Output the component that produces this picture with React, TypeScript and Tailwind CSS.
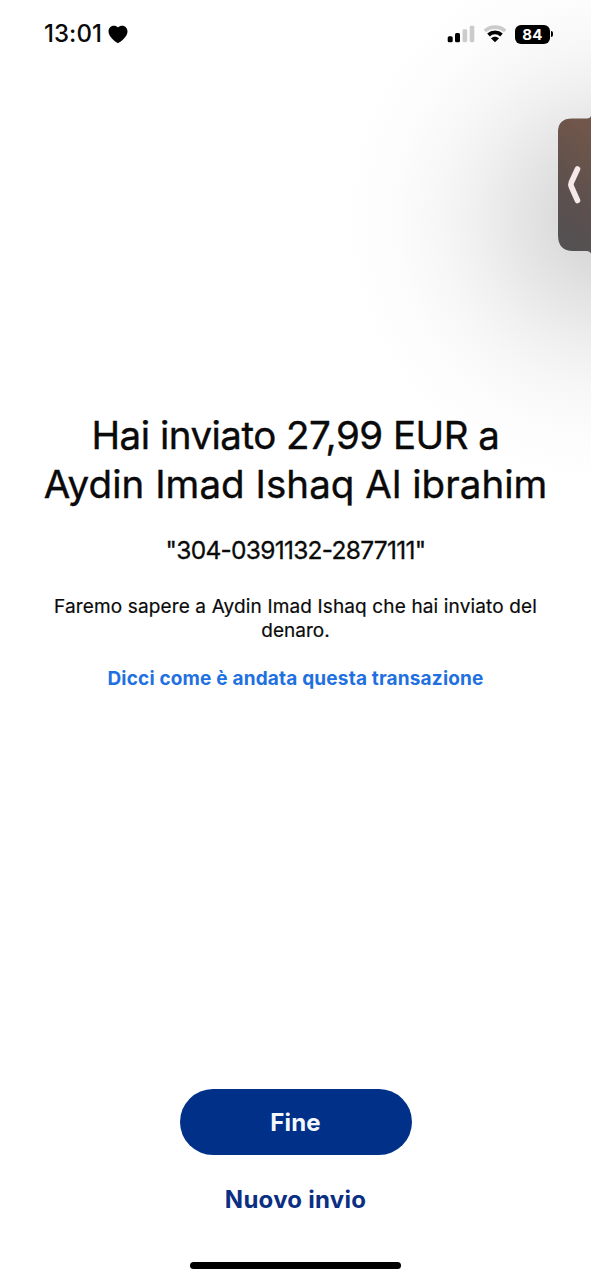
function Heart() {
  return (
    <svg width="20" height="19" viewBox="0 0 20 19" aria-hidden="true">
      <path
        d="M10 18.300C7.800 17 .5 12.300.5 6.600.5 3.100 2.800.7 5.600.7c1.900 0 3.500.6 4.400 1.900C10.900 1.300 12.500.7 14.400.7c2.800 0 5.100 2.400 5.100 5.900 0 5.700-7.300 10.400-9.500 11.700Z"
        fill="#000"
      />
    </svg>
  );
}

function Signal() {
  return (
    <svg width="28" height="18" viewBox="0 0 28 18" aria-hidden="true">
      <rect x="0.700" y="11.200" width="5" height="6" rx="1.500" fill="#000" />
      <rect x="8" y="8" width="5" height="9.200" rx="1.500" fill="#000" />
      <rect x="15.600" y="4.300" width="4.600" height="12.900" rx="1.400" fill="#cbcbcb" />
      <rect x="22.700" y="0.800" width="4.600" height="16.400" rx="1.400" fill="#cbcbcb" />
    </svg>
  );
}

function Wifi() {
  return (
    <svg width="24" height="18" viewBox="0 0 24 18" aria-hidden="true">
      <path d="M1.800 6C7.400.800 16.600.800 22.200 6" fill="none" stroke="#cbcbcb" strokeWidth="3.600" />
      <path d="M5.500 10C9.200 6.500 14.800 6.500 18.500 10" fill="none" stroke="#000" strokeWidth="3.800" />
      <path d="M7.900 13.200c2.300-2.100 5.900-2.100 8.200 0L12 17.300Z" fill="#000" />
    </svg>
  );
}

function StatusBar() {
  return (
    <header className="flex h-[68px] items-center justify-between pr-[38px] pl-[44px]">
      <div className="flex items-center gap-[6px]">
        <span className="w-[58px] text-[24px] leading-[68px] font-medium tracking-[0.050px] whitespace-nowrap">13:01</span>
        <Heart />
      </div>
      <div className="flex items-center">
        <Signal />
        <div className="ml-[8px] flex">
          <Wifi />
        </div>
        <div className="ml-[8px] flex h-[19px] w-[35px] items-center justify-center rounded-[6px] bg-black text-[15px] leading-[19px] font-bold tracking-[0.300px] text-white">
          84
        </div>
        <div className="ml-[1px] h-[6px] w-[2px] rounded-r-full bg-black" />
      </div>
    </header>
  );
}

function SideHandle() {
  return (
    <button aria-label="Apri" className="absolute top-[114px] right-0 h-[142px] w-[33px]">
      <svg width="33" height="142" viewBox="0 0 33 142">
        <defs>
          <linearGradient id="handle" x1="0.600" y1="0" x2="0.400" y2="1">
            <stop offset="0" stopColor="#72564a" />
            <stop offset="0.250" stopColor="#69544b" />
            <stop offset="0.600" stopColor="#5c504e" />
            <stop offset="1" stopColor="#535153" />
          </linearGradient>
        </defs>
        <path d="M33 2Q32 4.500 29 4.500H14Q0 4.500 0 18V121Q0 137 15 137H29Q32 137 33 139.500Z" fill="url(#handle)" />
        <path d="M19.500 55L13.300 68.500Q12.500 70.500 13.300 72.500L19.500 86.500" fill="none" stroke="#f4e8e8" strokeWidth="5.600" strokeLinecap="round" strokeLinejoin="round" />
      </svg>
    </button>
  );
}

export default function App() {
  return (
    <div className="relative flex h-[1280px] w-[591px] flex-col overflow-hidden bg-white bg-[radial-gradient(ellipse_270px_270px_at_611px_218px,#d0d0d0_0%,#d6d6d6_12%,#dfdfdf_24%,#e8e8e8_38%,#f0f0f0_50%,#f7f7f7_64%,#fcfcfc_80%,#ffffff_100%)] font-['Inter','Liberation_Sans',sans-serif] text-[#0a0a0a]">
      <StatusBar />
      <main className="flex flex-1 flex-col items-center pt-[343px] text-center whitespace-nowrap">
        <h1 className="text-[38.500px] leading-[48.500px] font-normal [-webkit-text-stroke:0.4px_#0a0a0a]">
          <span className="block tracking-[-0.500px]">Hai inviato 27,99 EUR a</span>
          <span className="block tracking-[0.050px]">Aydin Imad Ishaq Al ibrahim</span>
        </h1>
        <p className="mt-[27px] text-[24.500px] leading-[30px] tracking-[-0.720px] [-webkit-text-stroke:0.300px_#0a0a0a]">"304-0391132-2877111"</p>
        <p className="mt-[30px] text-[19px] leading-[24px] tracking-[0.140px] [-webkit-text-stroke:0.200px_#0a0a0a]">
          <span className="block">Faremo sapere a Aydin Imad Ishaq che hai inviato del</span>
          <span className="block tracking-normal">denaro.</span>
        </p>
        <a className="mt-[24px] text-[19px] leading-[24px] font-bold tracking-[0.180px] text-[#1f70e0]">Dicci come è andata questa transazione</a>
      </main>
      <footer className="flex flex-col items-center text-[24px] leading-[32px] font-bold">
        <button className="h-[66px] w-[232px] rounded-full bg-[#003087] pt-[2px] tracking-[0.200px] text-[#f5f7ff]">Fine</button>
        <button className="mt-[29px] tracking-[0.250px] text-[#0b2f82]">Nuovo invio</button>
        <div className="mt-[46px] mb-[11px] h-[7px] w-[211px] rounded-full bg-black" />
      </footer>
      <SideHandle />
    </div>
  );
}
